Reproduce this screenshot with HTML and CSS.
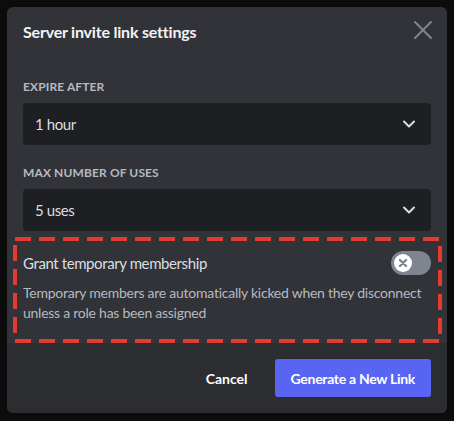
FILE: index.html
```html
<!DOCTYPE html>
<html lang="en">
<head>
  <meta charset="UTF-8">
  <meta name="viewport" content="width=device-width, initial-scale=1.0">
  <title>Server invite link settings</title>
  <link rel="stylesheet" href="styles.css">
</head>
<body>
  <div class="modal">
    <div class="modal-header">
      <h1>Server invite link settings</h1>
      <button class="close-btn" aria-label="Close">
        <svg width="24" height="24" viewBox="0 0 24 24">
          <path d="M4 4 L20 20 M20 4 L4 20" stroke="currentColor" stroke-width="2" stroke-linecap="round" fill="none"/>
        </svg>
      </button>
    </div>

    <div class="modal-body">
      <label class="field-label">Expire after</label>
      <div class="select">
        <span>1 hour</span>
        <svg class="chevron" width="16" height="16" viewBox="0 0 16 16">
          <path d="M3 5.5 L8 10.5 L13 5.5" stroke="currentColor" stroke-width="2" fill="none" stroke-linecap="round" stroke-linejoin="round"/>
        </svg>
      </div>

      <label class="field-label">Max number of uses</label>
      <div class="select">
        <span>5 uses</span>
        <svg class="chevron" width="16" height="16" viewBox="0 0 16 16">
          <path d="M3 5.5 L8 10.5 L13 5.5" stroke="currentColor" stroke-width="2" fill="none" stroke-linecap="round" stroke-linejoin="round"/>
        </svg>
      </div>

      <div class="temp-section">
        <svg class="highlight" width="100%" height="100%">
          <rect x="2" y="2" width="calc(100% - 4px)" height="calc(100% - 4px)" fill="none" stroke="#e33b2e" stroke-width="4" stroke-dasharray="16 8"/>
        </svg>
        <div class="toggle-row">
          <span class="toggle-label">Grant temporary membership</span>
          <div class="toggle">
            <div class="knob">
              <svg width="12" height="12" viewBox="0 0 12 12">
                <path d="M3 3 L9 9 M9 3 L3 9" stroke="#80848e" stroke-width="2.4" stroke-linecap="round"/>
              </svg>
            </div>
          </div>
        </div>
        <p class="note">Temporary members are automatically kicked when they disconnect unless a role has been assigned</p>
      </div>
    </div>

    <div class="modal-footer">
      <button class="btn-link">Cancel</button>
      <button class="btn-primary">Generate a New Link</button>
    </div>
  </div>
</body>
</html>
```

FILE: styles.css
```css
body {
  margin: 0;
  padding: 7px;
  background-color: #0c0c0d;
  font-family: Lato, "Noto Sans", sans-serif;
}

.modal {
  width: 440px;
  background-color: #313338;
  border-radius: 6px;
  overflow: hidden;
}

.modal-header {
  display: flex;
  justify-content: space-between;
  align-items: flex-start;
  padding: 15px 16px 0 16px;
  height: 52px;
  box-sizing: border-box;
}

.modal-header h1 {
  margin: 0;
  font-size: 16px;
  line-height: 20px;
  font-weight: 700;
  letter-spacing: -0.2px;
  color: #f2f3f5;
}

.close-btn {
  background: none;
  border: none;
  padding: 0;
  margin-top: -4px;
  margin-right: -4px;
  color: #80848e;
  cursor: pointer;
}

.modal-body {
  padding: 0 16px;
}

.field-label {
  display: block;
  margin: 20px 0 8px;
  font-size: 12px;
  line-height: 16px;
  font-weight: 700;
  text-transform: uppercase;
  color: #b5bac1;
  letter-spacing: 0.01em;
}

.select {
  display: flex;
  align-items: center;
  justify-content: space-between;
  height: 42px;
  padding: 0 14px 0 12px;
  background-color: #1e1f22;
  border-radius: 4px;
  font-size: 15px;
  letter-spacing: -0.4px;
  color: #dbdee1;
}

.chevron {
  color: #dbdee1;
}

.temp-section {
  position: relative;
  margin: 6px -11px 0 -10px;
  padding: 14px 11px 20px 10px;
}

.highlight {
  position: absolute;
  top: 0;
  left: 0;
  pointer-events: none;
}

.toggle-row {
  display: flex;
  align-items: center;
  justify-content: space-between;
}

.toggle-label {
  font-size: 15px;
  letter-spacing: -0.4px;
  color: #dbdee1;
}

.toggle {
  width: 40px;
  height: 24px;
  border-radius: 12px;
  background-color: #80848e;
  display: flex;
  align-items: center;
  padding-left: 3px;
  box-sizing: border-box;
}

.knob {
  width: 18px;
  height: 18px;
  border-radius: 50%;
  background-color: #fff;
  display: flex;
  align-items: center;
  justify-content: center;
}

.note {
  margin: 8px 0 0;
  font-size: 14px;
  line-height: 20px;
  letter-spacing: -0.25px;
  color: #b5bac1;
}

.modal-footer {
  display: flex;
  justify-content: flex-end;
  align-items: center;
  gap: 3px;
  padding: 16px;
  background-color: #2b2d31;
}

.btn-link {
  background: none;
  border: none;
  padding: 0 24px;
  height: 38px;
  font-family: inherit;
  font-size: 14px;
  font-weight: 700;
  color: #fff;
  cursor: pointer;
}

.btn-primary {
  height: 38px;
  padding: 0 16px;
  background-color: #5865f2;
  border: none;
  border-radius: 3px;
  font-family: inherit;
  font-size: 14px;
  font-weight: 700;
  letter-spacing: -0.3px;
  color: #fff;
  cursor: pointer;
}
```
